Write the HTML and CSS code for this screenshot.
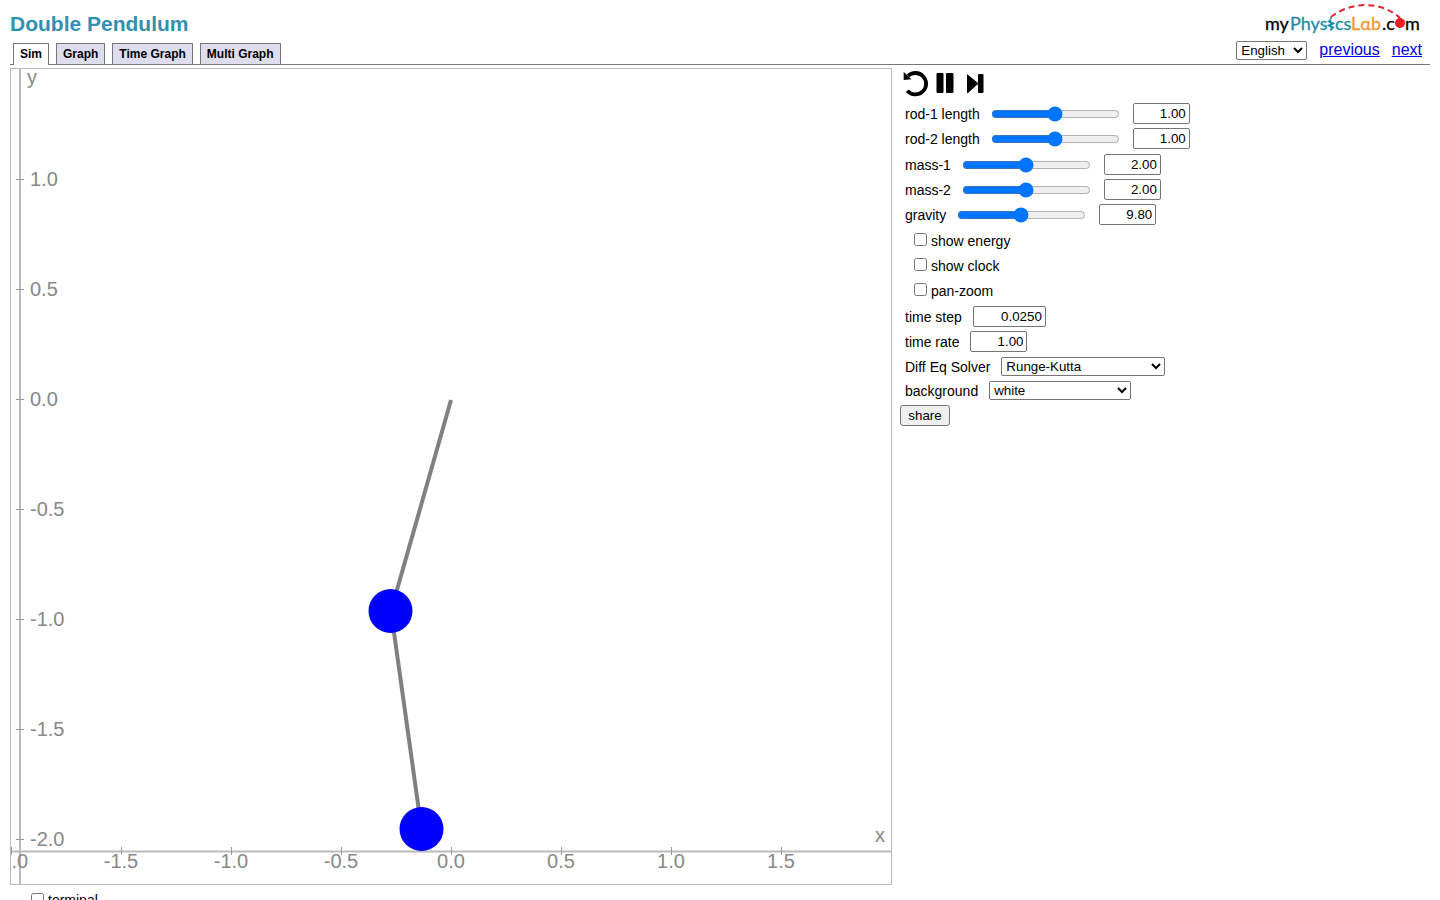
FILE: index.html
```
<!DOCTYPE html>
<html lang="en">
<head>
<meta charset="utf-8">
<title>Double Pendulum</title>
<link rel="stylesheet" href="styles.css">
</head>
<body>
<header class="header">
  <div class="header-left">
    <h1 class="title">Double Pendulum</h1>
    <nav class="tabs">
      <button class="tab tab-active" type="button">Sim</button>
      <button class="tab" type="button">Graph</button>
      <button class="tab" type="button">Time Graph</button>
      <button class="tab" type="button">Multi Graph</button>
    </nav>
  </div>
  <div class="header-right">
    <a class="logo" href="#" aria-label="myPhysicsLab.com">
      <svg width="158" height="36" viewBox="0 0 158 36">
        <path d="M67 15C84 1 115-3 136 16" fill="none" stroke="#e02535" stroke-width="2" stroke-dasharray="6 4"/>
        <g class="logo-text">
          <text x="1" y="28">my</text>
          <text x="26" y="28" class="logo-teal">Phys</text>
          <text x="71" y="28" class="logo-teal">cs</text>
          <text x="87" y="28" class="logo-orange">Lαb</text>
          <text x="118" y="28">.c</text>
          <text x="141" y="28">m</text>
        </g>
        <path d="M67 17.500l-2 2 4 2-4 2 4 2-2 2v1" fill="none" stroke="#1a8ca8" stroke-width="2"/>
        <circle cx="67" cy="16" r="1" fill="#1a8ca8"/>
        <circle cx="136" cy="21" r="5" fill="#ee1c25"/>
      </svg>
    </a>
    <div class="nav-row">
      <select class="select" aria-label="Language"><option>English</option></select>
      <a href="#">previous</a>
      <a href="#">next</a>
    </div>
  </div>
</header>
<main class="main">
  <div class="sim-column">
    <svg class="sim" viewBox="0 0 880 815" role="img" aria-label="Double pendulum simulation">
      <g class="axes">
        <path d="M9 0V815M0 782.5H880"/>
      </g>
      <g class="ticks">
        <path d="M5 110.5h8M5 220.5h8M5 330.5h8M5 440.5h8M5 550.5h8M5 660.5h8M5 770.5h8"/>
        <path d="M.5 778v8M110.5 778v8M220.5 778v8M330.5 778v8M440.5 778v8M550.5 778v8M660.5 778v8M770.5 778v8"/>
      </g>
      <g class="labels">
        <text x="16" y="15">y</text>
        <text x="19" y="117">1.0</text>
        <text x="19" y="227">0.5</text>
        <text x="19" y="337">0.0</text>
        <text x="19" y="447">-0.5</text>
        <text x="19" y="557">-1.0</text>
        <text x="19" y="667">-1.5</text>
        <text x="19" y="777">-2.0</text>
        <text x="864" y="773">x</text>
      </g>
      <g class="labels labels-x">
        <text x="0" y="799">-2.0</text>
        <text x="110" y="799">-1.5</text>
        <text x="220" y="799">-1.0</text>
        <text x="330" y="799">-0.5</text>
        <text x="440" y="799">0.0</text>
        <text x="550" y="799">0.5</text>
        <text x="660" y="799">1.0</text>
        <text x="770" y="799">1.5</text>
      </g>
      <path class="rods" d="M440 331L380 542L410.500 760"/>
      <circle class="bob" cx="379.500" cy="542" r="22"/>
      <circle class="bob" cx="410.500" cy="760" r="22"/>
    </svg>
    <label class="check-row terminal"><input class="check" type="checkbox"><span>terminal</span></label>
  </div>
  <form class="controls">
    <div class="buttons">
      <button class="icon-button" type="button" aria-label="reset">
        <svg width="30" height="30" viewBox="0 0 30 30"><path d="M8 8A10.700 10.700 0 1 1 7.300 22.700" fill="none" stroke="#000" stroke-width="3.800"/><path d="M3.700 4L11.500 11.200L3.700 12Z"/></svg>
      </button>
      <button class="icon-button" type="button" aria-label="pause">
        <svg width="30" height="30" viewBox="0 0 30 30"><rect x="6.500" y="5" width="7" height="20" rx="1"/><rect x="16" y="5" width="7.500" height="20" rx="1"/></svg>
      </button>
      <button class="icon-button" type="button" aria-label="step">
        <svg width="30" height="30" viewBox="0 0 30 30"><path d="M7 6L18 15V7Q18 6 19 6H22.500Q23.500 6 23.500 7V24Q23.500 25 22.500 25H19Q18 25 18 24V16L8 25Q7 26 7 24Z"/></svg>
      </button>
    </div>
    <div class="group">
      <div class="row"><label for="rod1">rod-1 length</label><input class="slider" type="range" aria-label="rod-1 length slider" value="50"><input class="number" id="rod1" type="text" value="1.00"></div>
      <div class="row"><label for="rod2">rod-2 length</label><input class="slider" type="range" aria-label="rod-2 length slider" value="50"><input class="number" id="rod2" type="text" value="1.00"></div>
    </div>
    <div>
      <div class="row"><label for="mass1">mass-1</label><input class="slider" type="range" aria-label="mass-1 slider" value="50"><input class="number" id="mass1" type="text" value="2.00"></div>
      <div class="row"><label for="mass2">mass-2</label><input class="slider" type="range" aria-label="mass-2 slider" value="50"><input class="number" id="mass2" type="text" value="2.00"></div>
      <div class="row"><label for="gravity">gravity</label><input class="slider" type="range" aria-label="gravity slider" value="49"><input class="number" id="gravity" type="text" value="9.80"></div>
    </div>
    <div class="checks">
      <label class="check-row"><input class="check" type="checkbox"><span>show energy</span></label>
      <label class="check-row"><input class="check" type="checkbox"><span>show clock</span></label>
      <label class="check-row"><input class="check" type="checkbox"><span>pan-zoom</span></label>
    </div>
    <div>
      <div class="row"><label for="step">time step</label><input class="number number-wide" id="step" type="text" value="0.0250"></div>
      <div class="row"><label for="rate">time rate</label><input class="number" id="rate" type="text" value="1.00"></div>
      <div class="row"><label for="solver">Diff Eq Solver</label><select class="select select-solver" id="solver"><option>Runge-Kutta</option></select></div>
      <div class="row row-short"><label for="background">background</label><select class="select select-background" id="background"><option>white</option></select></div>
      <button class="share" type="button">share</button>
    </div>
  </form>
</main>
</body>
</html>
```
FILE: styles.css
```
* {
  box-sizing: border-box;
}

body {
  margin: 0 10px;
  background: #fff;
  color: #000;
  font: 16px "Liberation Sans", Arial, sans-serif;
}

input,
select,
button {
  margin: 0;
  font-family: "Liberation Sans", Arial, sans-serif;
}

.header {
  display: flex;
  justify-content: space-between;
  height: 65px;
  border-bottom: 1px solid #777;
}

.header-left {
  display: flex;
  flex-direction: column;
  justify-content: space-between;
}

.title {
  margin: 0;
  padding-top: 12px;
  color: #318fb0;
  font-size: 21px;
  line-height: 24px;
}

.tabs {
  display: flex;
  gap: 7px;
  padding-left: 3px;
}

.tab {
  height: 21px;
  padding: 0 6px;
  border: 1px solid #777;
  border-bottom: 0;
  background: #dde;
  color: #000;
  font-size: 12px;
  font-weight: bold;
}

.tab-active {
  height: 22px;
  margin-bottom: -1px;
  padding-bottom: 1px;
  background: #fff;
}

.header-right {
  display: flex;
  flex-direction: column;
  align-items: flex-end;
  padding: 2px 8px 0 0;
}

.logo,
.logo svg {
  display: block;
}

.logo-text {
  fill: #000;
  stroke: #000;
  stroke-width: 0.3;
  font: 18px Lato, "Noto Sans", sans-serif;
}

.logo-teal {
  fill: #1a8ca8;
  stroke: #1a8ca8;
}

.logo-orange {
  fill: #f0962d;
  stroke: #f0962d;
}

.nav-row {
  display: flex;
  align-items: center;
  gap: 12px;
  height: 24px;
}

.nav-row a {
  color: #0000ee;
}

.select {
  height: 19px;
  padding: 0;
  border: 1px solid #767676;
  border-radius: 2px;
  background-color: #fff;
  color: #000;
}

.nav-row .select {
  width: 71px;
}

.main {
  display: grid;
  grid-template-columns: 882fr 530fr;
  gap: 8px;
  padding-top: 3px;
}

.sim {
  display: block;
  width: 100%;
  border: 1px solid #bbb;
  overflow: hidden;
}

.axes {
  fill: none;
  stroke: #bbb;
  stroke-width: 2;
}

.ticks {
  fill: none;
  stroke: #999;
  stroke-width: 1;
}

.labels {
  fill: #888;
  font-size: 20px;
}

.labels-x {
  text-anchor: middle;
}

.rods {
  fill: none;
  stroke: #808080;
  stroke-width: 4;
}

.bob {
  fill: #00f;
}

.controls {
  display: flex;
  flex-direction: column;
  font-size: 14px;
}

.buttons {
  display: flex;
  height: 33px;
}

.icon-button {
  width: 30px;
  height: 30px;
  padding: 0;
  border: 0;
  background: none;
}

.icon-button svg {
  display: block;
}

.group {
  padding-bottom: 1px;
}

.checks {
  padding-bottom: 2px;
}

.row {
  display: flex;
  align-items: center;
  height: 25px;
  padding-left: 5px;
}

.row-short {
  height: 23px;
}

.row label {
  margin-right: 11px;
}

.slider {
  width: 129px;
  margin-right: 13px;
}

.number {
  width: 57px;
  height: 21px;
  padding: 1px 3px;
  border: 1px solid #767676;
  border-radius: 2px;
  text-align: right;
}

.number-wide {
  width: 73px;
}

.check-row {
  display: flex;
  align-items: center;
  gap: 4px;
  height: 25px;
  padding-left: 14px;
}

.check {
  width: 13px;
  height: 13px;
}

.check-row span {
  padding-top: 2px;
}

.terminal {
  height: 28px;
  padding-left: 21px;
  font-size: 14px;
}

.select-solver {
  width: 164px;
}

.select-background {
  width: 142px;
}

.share {
  display: block;
  width: 50px;
  height: 21px;
  margin-top: 3px;
  padding: 0;
  border: 1px solid #767676;
  border-radius: 3px;
  background: #efefef;
  color: #000;
}
```
